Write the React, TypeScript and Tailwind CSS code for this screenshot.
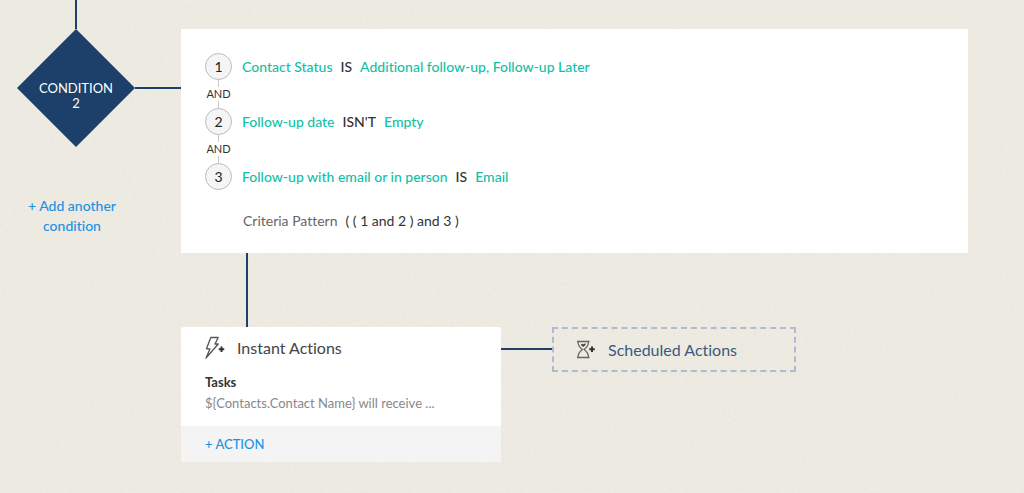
import * as React from "react";

type Criterion = {
  field: string;
  operator: string;
  value: string;
};

const criteria: Criterion[] = [
  {
    field: "Contact Status",
    operator: "IS",
    value: "Additional follow-up, Follow-up Later",
  },
  { field: "Follow-up date", operator: "ISN'T", value: "Empty" },
  {
    field: "Follow-up with email or in person",
    operator: "IS",
    value: "Email",
  },
];

// Fine paper grain behind the whole canvas
function PaperTexture() {
  return (
    <svg className="absolute inset-0 h-full w-full" aria-hidden="true">
      <filter id="grain">
        <feTurbulence
          type="fractalNoise"
          baseFrequency="0.35"
          numOctaves="2"
          seed="4"
        />
        <feColorMatrix values="0 0 0 0 0.5  0 0 0 0 0.48  0 0 0 0 0.42  0.5 0 0 0 -0.16" />
      </filter>
      <rect width="100%" height="100%" filter="url(#grain)" opacity="0.25" />
    </svg>
  );
}

function BoltPlusIcon() {
  return (
    <svg
      width="20"
      height="24"
      viewBox="0 0 20 24"
      fill="none"
      stroke="#555555"
      strokeWidth="1.3"
      strokeLinejoin="round"
      aria-hidden="true"
    >
      <path d="M5.8 1.5H13.2L10 8H13.2L1 22L5 12.8H1.5Z" />
      <path d="M16.5 10.5V16M13.75 13.25H19.25" stroke="#333333" strokeWidth="2" />
    </svg>
  );
}

function HourglassPlusIcon() {
  return (
    <svg
      width="20"
      height="20"
      viewBox="0 0 20 20"
      fill="none"
      stroke="#666666"
      strokeWidth="1.3"
      strokeLinejoin="round"
      aria-hidden="true"
    >
      <path d="M1 1.5H13.5M1 17.5H13.5" strokeWidth="1.6" />
      <path d="M2 1.5C2 6 3.5 7.5 6.5 9.5C3.5 11.5 2 13 2 17.5M12.5 1.5C12.5 6 11 7.5 8 9.5C11 11.5 12.5 13 12.5 17.5" />
      <path
        d="M5.2 4.8L6.5 4.3L7.5 4.8L9.2 3.8L8.8 5.2L7.3 6.4Z"
        fill="#333333"
        stroke="#333333"
        strokeWidth="0.8"
      />
      <path d="M16 6.5V12M13.25 9.25H18.75" stroke="#333333" strokeWidth="2" />
    </svg>
  );
}

function ConditionNode() {
  return (
    <div className="w-[181px] shrink-0">
      <div className="ml-[75px] h-[29px] w-0.5 bg-[#1c4069]" />
      <div className="flex items-center pl-[17px]">
        <div className="flex size-[118px] shrink-0 items-center justify-center bg-[#1c4069] pt-4 text-center text-[13px] leading-[15px] text-white [clip-path:polygon(50%_0,100%_50%,50%_100%,0_50%)]">
          CONDITION
          <br />2
        </div>
        <div className="h-0.5 flex-1 bg-[#1c4069]" />
      </div>
      <button
        type="button"
        className="mt-[49px] ml-6 w-24 cursor-pointer text-sm leading-5 font-medium text-[#1a92e4]"
      >
        + Add another condition
      </button>
    </div>
  );
}

function CriteriaCard() {
  return (
    <section className="bg-white px-6 pt-6 pb-[22px] text-sm">
      <ol>
        {criteria.map((item, index) => (
          <li key={item.field}>
            {index > 0 && (
              <div className="flex h-7 w-[27px] flex-col items-center">
                <span className="w-px flex-1 bg-[#c8c8c8]" />
                <span className="text-[11px] leading-[14px] text-[#333333]">
                  AND
                </span>
                <span className="w-px flex-1 bg-[#c8c8c8]" />
              </div>
            )}
            <div className="flex h-[27px] items-center">
              <span className="flex size-[27px] shrink-0 items-center justify-center rounded-full border border-[#bbbbbb] bg-[#f5f5f5] text-[#222222]">
                {index + 1}
              </span>
              <div className="ml-2.5 flex gap-2 font-medium text-[#12bfa8]">
                <span>{item.field}</span>
                <span className="text-[#333333]">{item.operator}</span>
                <span>{item.value}</span>
              </div>
            </div>
          </li>
        ))}
      </ol>
      <p className="mt-[21px] ml-[38px] flex gap-2 leading-5">
        <span className="text-[#666666]">Criteria Pattern</span>
        <span className="text-[#333333]">( ( 1 and 2 ) and 3 )</span>
      </p>
    </section>
  );
}

function InstantActions() {
  return (
    <section className="w-80 shrink-0 overflow-hidden rounded-xs bg-white">
      <div className="px-6 pt-[9px] pb-3">
        <h2 className="flex items-center gap-3 text-base leading-6 text-[#444444]">
          <BoltPlusIcon />
          Instant Actions
        </h2>
        <h3 className="mt-3 text-[13px] leading-5 font-bold text-[#333333]">
          Tasks
        </h3>
        <p className="text-[13px] leading-[22px] text-[#888888]">
          {"${Contacts.Contact Name} will receive ..."}
        </p>
      </div>
      <div className="bg-[#f4f4f4] px-6 py-2">
        <button
          type="button"
          className="block cursor-pointer text-[13px] leading-5 font-medium text-[#1a92e4]"
        >
          + ACTION
        </button>
      </div>
    </section>
  );
}

export default function App() {
  return (
    <main className="relative min-h-screen bg-[#eeebe3] font-['Lato',sans-serif] [font-variant-ligatures:none]">
      <PaperTexture />
      <div className="relative flex pr-14 pb-[31px]">
        <ConditionNode />
        <div className="min-w-0 flex-1 pt-[29px]">
          <CriteriaCard />
          <div className="ml-[65px] h-[74px] w-0.5 bg-[#1c4069]" />
          <div className="flex items-start">
            <InstantActions />
            <div className="mt-[21px] h-0.5 w-[51px] bg-[#1c4069]" />
            <button
              type="button"
              className="flex h-[45px] w-[244px] cursor-pointer items-center gap-3 border-2 border-dashed border-[#aebbd0] pl-[22px] text-base text-[#3a5a80]"
            >
              <HourglassPlusIcon />
              Scheduled Actions
            </button>
          </div>
        </div>
      </div>
    </main>
  );
}
